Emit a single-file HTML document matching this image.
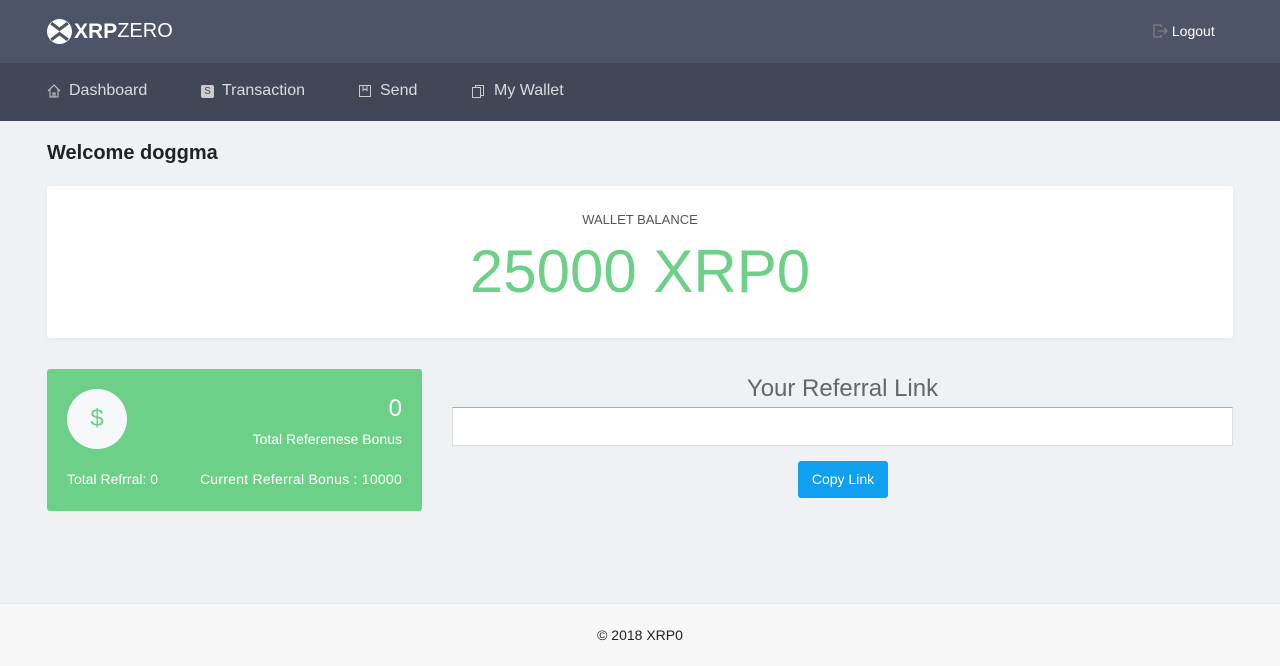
<!DOCTYPE html>
<html><head><meta charset="utf-8"><style>
*{margin:0;padding:0;box-sizing:border-box}
body{width:1280px;height:666px;background:#eff2f5;font-family:"Liberation Sans",sans-serif;position:relative;overflow:hidden}
.top{position:absolute;left:0;top:0;width:1280px;height:63px;background:#4e5467}
.nav{position:absolute;left:0;top:63px;width:1280px;height:58px;background:#414757}
.nav>span{position:absolute;top:19px;font-size:16px;color:#d9dbe0;display:flex;align-items:center}
.nav svg,.nav i{margin-right:8px}
.logo{position:absolute;left:47px;top:19px;color:#fff;font-size:21px;display:flex;align-items:center}
.logout{position:absolute;left:1153px;top:23px;color:#fff;font-size:14px}
h1{position:absolute;left:47px;top:142px;font-size:20px;font-weight:bold;color:#222}
.bal{position:absolute;left:47px;top:186px;width:1186px;height:152px;background:#fff;border-radius:3px;box-shadow:0 1px 6px rgba(0,0,0,.06);text-align:center}
.green{position:absolute;left:47px;top:369px;width:375px;height:142px;background:#6dd088;border-radius:3px;color:#fff}
.foot{position:absolute;left:0;top:603px;width:1280px;height:63px;background:#f7f7f7;border-top:1px solid #e8e8e8;text-align:center;font-size:14px;color:#222;padding-top:23px}
</style></head><body>
<div class="top">
<div class="logo"><svg width="25" height="25" viewBox="0 0 24 24"><circle cx="12" cy="12" r="12" fill="#fff"/><path d="M4 4L12 10L20 4M4 20L12 14L20 20" stroke="#4e5467" stroke-width="3" fill="none"/></svg><b style="margin-left:2px">XRP</b><span style="font-size:20px">ZERO</span></div>
<div class="logout"><svg width="15" height="14" viewBox="0 0 15 14" style="vertical-align:-2px"><path d="M8 3V1H1v12h7v-2M5 7h9M11 4l3 3-3 3" stroke="#888" fill="none"/></svg> Logout</div>
</div>
<div class="nav">
<span style="left:47px"><svg width="14" height="14" viewBox="0 0 14 14"><path d="M1 7L7 1l6 6M3 5v8h8V5M6 13V9h2v4" stroke="#ccc" fill="none"/></svg>Dashboard</span>
<span style="left:201px"><i style="display:inline-block;width:13px;height:13px;background:#ccc;border-radius:2px;color:#414757;font-size:10px;text-align:center;line-height:13px;font-style:normal">S</i>Transaction</span>
<span style="left:358px"><svg width="14" height="14" viewBox="0 0 14 14"><path d="M1.5 1.5h11v11h-11zM5 1.5v5l2-1.5 2 1.5v-5" stroke="#ccc" fill="none"/></svg>Send</span>
<span style="left:471px"><svg width="15" height="15" viewBox="0 0 15 15"><path d="M1.5 3.5h8v10h-8zM4.5 3.5V1.5h8v10h-3" stroke="#ccc" fill="none"/></svg>My Wallet</span>
</div>
<h1>Welcome doggma</h1>
<div class="bal"><div style="padding-top:26px;font-size:13px;color:#555">WALLET BALANCE</div><div style="font-size:60px;color:#6dd088;margin-top:10px">25000 XRP0</div></div>
<div class="green">
<div style="position:absolute;left:20px;top:20px;width:60px;height:60px;border-radius:50%;background:#f7f8fa;color:#6dd088;font-size:24px;text-align:center;line-height:60px">$</div>
<div style="position:absolute;right:20px;top:26px;font-size:24px">0</div>
<div style="position:absolute;right:20px;top:62px;font-size:14px">Total Referenese Bonus</div>
<div style="position:absolute;left:20px;top:102px;font-size:14px">Total Refrral: 0</div>
<div style="position:absolute;right:20px;top:102px;font-size:14px;letter-spacing:.25px">Current Referral Bonus : 10000</div>
</div>
<div style="position:absolute;left:452px;top:375px;width:781px;text-align:center;font-size:24px;color:#666">Your Referral Link</div>
<div style="position:absolute;left:452px;top:407px;width:781px;height:39px;background:#fff;border:1px solid #ddd;border-top-color:#aaa"></div>
<div style="position:absolute;left:798px;top:461px;width:90px;height:37px;background:#119ff0;color:#fff;border-radius:3px;font-size:14px;text-align:center;line-height:37px">Copy Link</div>
<div class="foot">© 2018 XRP0</div>
</body></html>
